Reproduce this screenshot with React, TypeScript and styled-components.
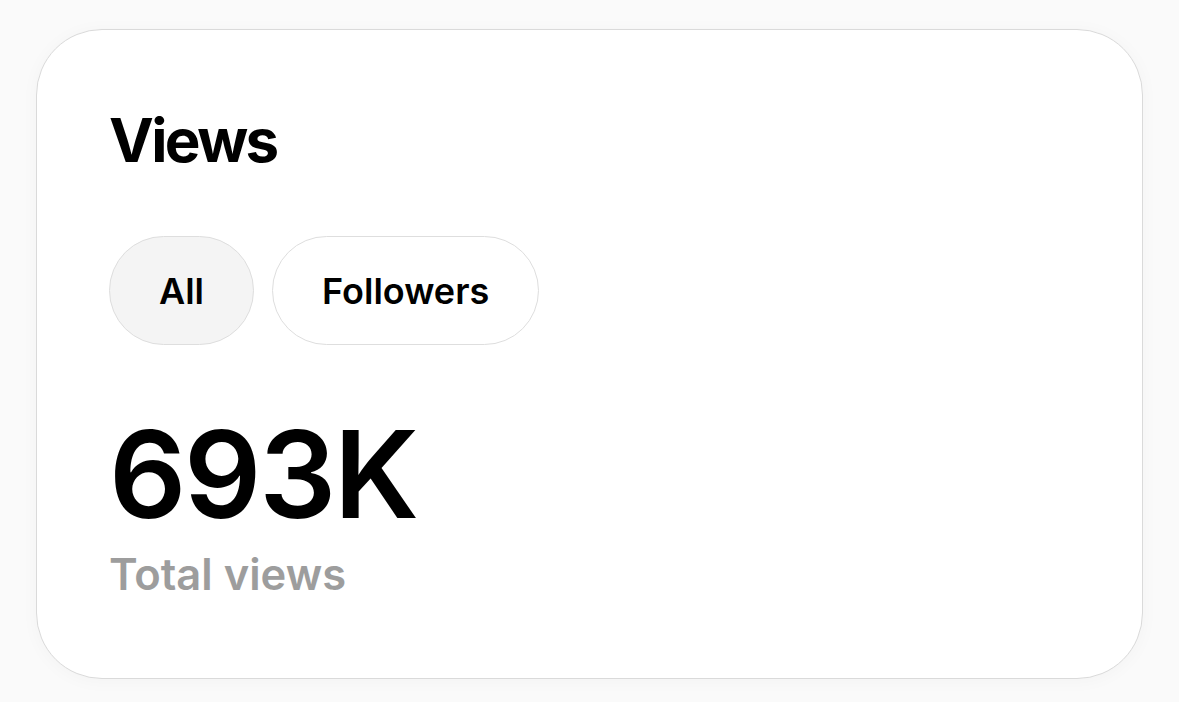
import * as React from 'react';
import { useState } from 'react';
import styled, { createGlobalStyle } from 'styled-components';

const GlobalStyle = createGlobalStyle`
  html, body {
    margin: 0;
    padding: 0;
    background: #fafafa;
    font-family: Inter, "Liberation Sans", sans-serif;
  }
`

const Page = styled.div`
  width: 1179px;
  height: 702px;
  padding: 29px 0 0 36px;
  box-sizing: border-box;
`
const Card = styled.section`
  width: 1107px;
  height: 650px;
  box-sizing: border-box;
  background: #ffffff;
  border: 1.5px solid #dadada;
  border-radius: 66px;
  box-shadow: 0 2px 18px rgba(0, 0, 0, 0.03);
  padding: 74px 72px 0;
  display: flex;
  flex-direction: column;
`
const Title = styled.h2`
  margin: 0;
  font-size: 60px;
  line-height: 72px;
  font-weight: 700;
  letter-spacing: -2.6px;
  color: #000;
`
const Tabs = styled.div`
  display: flex;
  gap: 18px;
  margin-top: 60px;
`
const Pill = styled.button<{ $active?: boolean }>`
  height: 109px;
  padding: 0 49px;
  border-radius: 55px;
  border: 1.5px solid #dedede;
  background: ${props => (props.$active ? '#f4f4f4' : '#ffffff')};
  font-family: inherit;
  font-size: 36px;
  font-weight: 600;
  color: #000;
  cursor: pointer;
`
const Stat = styled.div`
  margin-top: 69px;
  font-size: 121px;
  line-height: 120px;
  font-weight: 600;
  letter-spacing: -2.3px;
  color: #000;
`
const Caption = styled.div`
  margin-top: 19px;
  font-size: 43.5px;
  line-height: 43px;
  font-weight: 600;
  color: #9d9d9d;
`

export default function App() {
  const [tab, setTab] = useState('all')

  return (
    <Page>
      <GlobalStyle />
      <Card>
        <Title>Views</Title>
        <Tabs>
          <Pill $active={tab === 'all'} onClick={() => setTab('all')}>All</Pill>
          <Pill $active={tab === 'followers'} onClick={() => setTab('followers')}>Followers</Pill>
        </Tabs>
        <Stat>693K</Stat>
        <Caption>Total views</Caption>
      </Card>
    </Page>
  );
}
